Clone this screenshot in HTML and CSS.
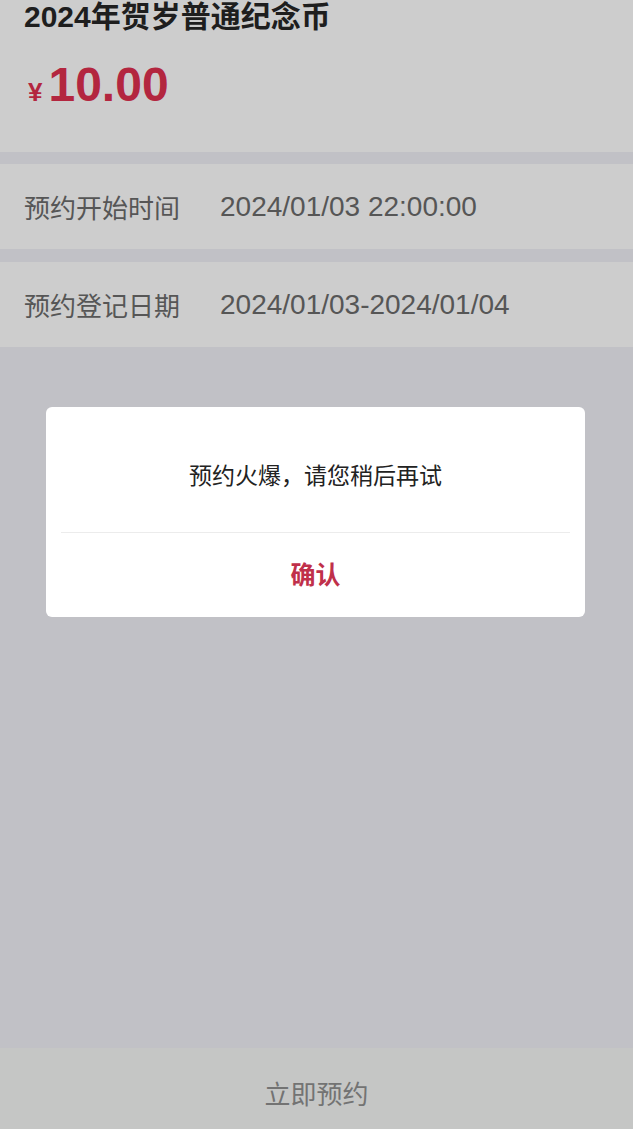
FILE: index.html
```html
<!DOCTYPE html>
<html lang="zh-CN">
<head>
    <meta charset="UTF-8">
    <meta name="viewport" content="width=device-width, initial-scale=1.0">
    <title>预约</title>
    <link rel="stylesheet" href="styles.css">
</head>
<body>

    <div class="page">
        <div class="goods">
            <div class="goods-title">2024年贺岁普通纪念币</div>
            <div class="goods-price"><span class="yen">¥</span>10.00</div>
        </div>

        <div class="info-row">
            <span class="info-label">预约开始时间</span>
            <span class="info-value">2024/01/03 22:00:00</span>
        </div>

        <div class="info-row">
            <span class="info-label">预约登记日期</span>
            <span class="info-value">2024/01/03-2024/01/04</span>
        </div>

        <div class="spacer"></div>

        <div class="footer">立即预约</div>
    </div>

    <!-- Alert dialog over the mask -->
    <div class="dialog">
        <div class="dialog-msg">预约火爆，请您稍后再试</div>
        <div class="dialog-line"></div>
        <div class="dialog-btn">确认</div>
    </div>

</body>
</html>
```

FILE: styles.css
```css
body {
    margin: 0;
    background-color: #ffffff;
    font-family: "Liberation Sans", "Noto Sans CJK SC", sans-serif;
}
.page {
    width: 633px;
    height: 1129px;
    display: flex;
    flex-direction: column;
    gap: 13px;
    background-color: #c1c1c6;
}
.goods {
    height: 152px;
    margin-bottom: -1px;
    padding-left: 24px;
    box-sizing: border-box;
    background-color: #cdcdcd;
}
.goods-title {
    font-size: 30px;
    font-weight: bold;
    line-height: 34px;
    color: #1e1e1e;
}
.goods-price {
    margin-top: 26px;
    font-size: 48px;
    font-weight: bold;
    line-height: 50px;
    color: #b3263f;
}
.yen {
    font-size: 26px;
    margin-left: 4px;
    margin-right: 6px;
}
.info-row {
    height: 85px;
    display: flex;
    align-items: center;
    padding-left: 24px;
    background-color: #cdcdcd;
    color: #565656;
}
.info-label {
    font-size: 26px;
    width: 196px;
}
.info-value {
    font-size: 28px;
}
.spacer {
    flex: 1;
}
.footer {
    height: 81px;
    margin-top: -13px;
    padding-top: 7px;
    box-sizing: border-box;
    display: flex;
    align-items: center;
    justify-content: center;
    background-color: #c5c6c5;
    font-size: 26px;
    color: #737373;
}
.dialog {
    position: absolute;
    left: 46px;
    top: 407px;
    width: 539px;
    background-color: #ffffff;
    border-radius: 6px;
}
.dialog-msg {
    padding: 53px 0 40px;
    text-align: center;
    font-size: 23px;
    line-height: 32px;
    color: #222222;
}
.dialog-line {
    height: 1px;
    margin: 0 15px;
    background-color: #ececec;
}
.dialog-btn {
    height: 84px;
    line-height: 84px;
    text-align: center;
    font-size: 25px;
    font-weight: bold;
    color: #c0304a;
}
```
